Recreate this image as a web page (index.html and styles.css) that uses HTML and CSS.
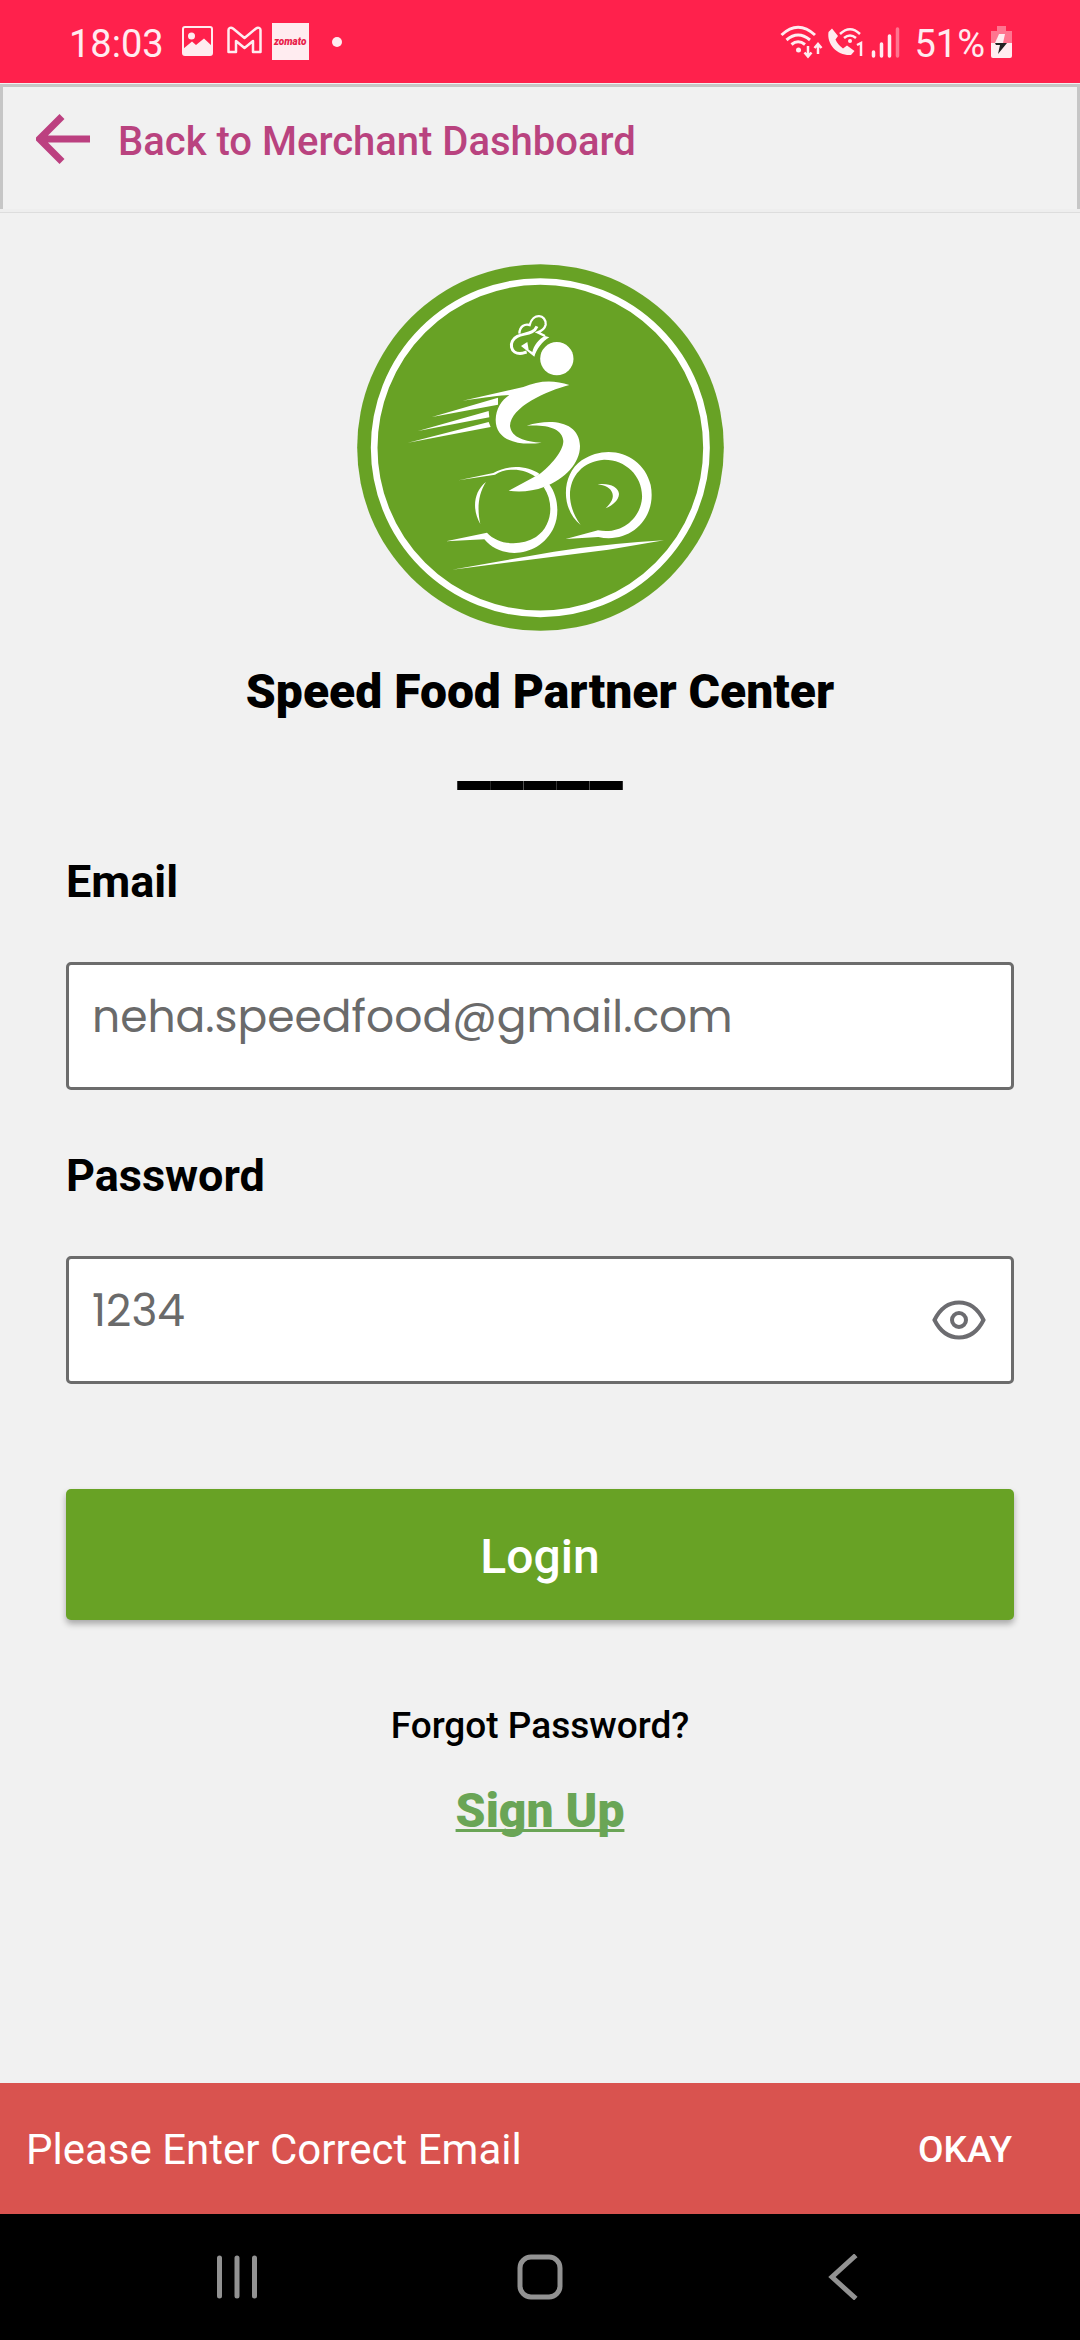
FILE: index.html
```html
<!DOCTYPE html>
<html lang="en">
<head>
<meta charset="utf-8">
<meta name="viewport" content="width=device-width, initial-scale=1">
<title>Speed Food Partner Center</title>
<link rel="stylesheet" href="styles.css">
</head>
<body>
<div class="status">
  <div class="status-side">
    <span class="clock">18:03</span>
    <svg class="ic-photo" width="31" height="31" viewBox="0 0 31 31"><rect x="1" y="1" width="29" height="28" rx="2" fill="none" stroke="#ffecf0" stroke-width="2"/><circle cx="9.500" cy="10" r="3.500" fill="#ffecf0"/><path d="M1 23L10 15.500 14 19 22 12.500 30 20V29H1z" fill="#ffecf0"/></svg>
    <svg class="ic-mail" width="35" height="31" viewBox="0 0 35 31"><path d="M1.500 26V4C1.500 2 4 1 6 2.500L17.500 12 29 2.500C31 1 33.500 2 33.500 4V26H26V15L17.500 22 9 15V26z" fill="none" stroke="#ffecf0" stroke-width="2.500" stroke-linejoin="round"/></svg>
    <span class="brand">zomato</span>
    <span class="dot"></span>
  </div>
  <div class="status-side">
    <svg width="120" height="34" viewBox="0 0 120 34" fill="none" stroke="#ffecf0">
      <path d="M1.500 10Q18 -5.500 35 10M6.500 15Q18 5 30 15M11.500 19.500Q18 14 25 19.500" stroke-width="3"/>
      <circle cx="18.500" cy="25" r="2.500" fill="#ffecf0" stroke="none"/>
      <path d="M28 21V31M24.500 27.500L28 31.500 31.500 27.500M38 29V19M34.500 23L38 19 41.500 23" stroke-width="2.500"/>
      <path d="M52 3.500L48.500 7C46.500 20 58 31 71 30L74.500 26 67 20.500 63 23.500Q57.500 19.500 55.500 14.500L58 11z" fill="#ffecf0" stroke="none"/>
      <path d="M60 9Q70 -.5 80 9M64 13Q70 8 76 13" stroke-width="2.500"/>
      <circle cx="70" cy="16" r="2" fill="#ffecf0" stroke="none"/>
      <path d="M77 20L81 18V31" stroke-width="2.500"/>
      <path d="M93.500 27V31M101.500 19V31M109.500 11V31" stroke-width="3.500" stroke-linecap="round"/>
      <path d="M117.500 4V31" stroke="#ff7590" stroke-width="3.500" stroke-linecap="round"/>
    </svg>
    <span class="clock charge">51%</span>
    <svg class="ic-battery" width="21" height="34" viewBox="0 0 21 34"><path d="M6 1H15V6H21V18H0V6H6z" fill="#ff7590"/><path d="M0 18H21V31Q21 33 19 33H2Q0 33 0 31z" fill="#ffecf0"/><path d="M8 9H14L12 18H4z" fill="#ffecf0"/><path d="M4 18H16L7 29 9 20H5z" fill="#222"/></svg>
  </div>
</div>

<header class="topbar">
  <a class="back" href="#">
    <svg width="54" height="50" viewBox="0 0 54 50"><path d="M26 2.500L3.500 25 26 47.500M3 25H54" fill="none" stroke="#bc4080" stroke-width="7"/></svg>
    <span class="back-text">Back to Merchant Dashboard</span>
  </a>
</header>

<main class="content">
  <svg class="logo" viewBox="21 27 1101 1101" role="img" aria-label="Speed Food">
    <circle cx="571.500" cy="577.500" r="550" fill="#68a225"/>
    <circle cx="571" cy="578" r="498.500" fill="none" stroke="#fff" stroke-width="20"/>
    <g fill="#fff">
      <circle cx="620.500" cy="311" r="50"/>
      <path d="M338 437L520 396C565 376 612 374 658 390C590 408 482 455 480 513C484 548 525 560 575 563C505 573 437 557 437 494C438 462 454 436 478 420Q440 422 338 437z"/>
      <path d="M246 486L444 428V449zM204 528L416 468L418 487zM174 563L416 501L422 516z"/>
      <path d="M530 512C610 488 688 502 690 573C690 625 645 672 584 695C548 709 510 712 476 707L569 657C600 633 640 590 640 558C638 520 590 508 530 512z"/>
      <path d="M326 676L430 654C475 629 530 631 569 657L556 665C520 638 470 638 435 659z"/>
      <path d="M581 696L597 687C623 720 630 775 612 816C572 906 455 917 403 853L288 859 411 833C445 870 510 875 558 846C606 814 614 745 581 696z"/>
      <path d="M408 681C384 717 381 764 391 807C368 769 367 713 408 681z"/>
      <path d="M692 810C630 760 635 658 695 616C775 562 880 598 902 690C922 792 838 867 745 846L647 852 744 826C815 840 871 790 876 730C880 665 828 613 762 614C668 620 626 720 692 810z"/>
      <path d="M743 688C778 683 806 696 807 717C806 735 791 749 767 760C784 742 792 730 787 714C782 699 765 691 743 688z"/>
      <path d="M306 944L612 890Q790 864 942 856L775 884z"/>
    </g>
    <g fill="none" stroke="#fff" stroke-width="7">
      <path d="M508 236C509 213 524 206 539 210C549 172 589 178 587 209Q583 225 563 232L585 243"/>
      <path d="M561 214C550 239 523 234 502 244C474 257 479 300 516 295L530 291" stroke-width="9"/>
    </g>
    <path d="M585 243L598 247C576 260 560 282 553 305L513 273 532 261 536 284 547 291C551 273 566 251 585 243z" fill="#fff"/>
  </svg>

  <h1 class="title">Speed Food Partner Center</h1>
  <div class="rule">_____</div>

  <form class="form">
    <label class="label" for="email">Email</label>
    <input class="field" id="email" type="text" placeholder="neha.speedfood@gmail.com">
    <label class="label" for="password">Password</label>
    <div class="field-wrap">
      <input class="field" id="password" type="text" placeholder="1234">
      <button class="eye" type="button" aria-label="Show password">
        <svg width="54" height="40" viewBox="0 0 54 40" fill="none" stroke="#6c6c70" stroke-width="4"><path d="M2.500 20C8 9 16 2.500 27 2.500S46 9 51.500 20C46 31 38 37.500 27 37.500S8 31 2.500 20z"/><circle cx="27" cy="20" r="7"/></svg>
      </button>
    </div>
    <button class="login" type="button">Login</button>
  </form>

  <a class="forgot" href="#">Forgot Password?</a>
  <a class="signup" href="#">Sign Up</a>
</main>

<div class="snackbar" role="alert">
  <span>Please Enter Correct Email</span>
  <button class="okay" type="button">OKAY</button>
</div>

<nav class="navbar">
  <button type="button" aria-label="Recent apps"><svg width="46" height="46" viewBox="0 0 46 46"><path d="M5.500 4V42M23 4V42M40.500 4V42" stroke="#929292" stroke-width="5" stroke-linecap="round"/></svg></button>
  <button type="button" aria-label="Home"><svg width="46" height="46" viewBox="0 0 46 46"><rect x="3" y="3" width="40" height="40" rx="11" fill="none" stroke="#929292" stroke-width="5"/></svg></button>
  <button type="button" aria-label="Back"><svg width="46" height="46" viewBox="0 0 46 46"><path d="M34 3L12 23 34 43" fill="none" stroke="#929292" stroke-width="5" stroke-linecap="square"/></svg></button>
</nav>
</body>
</html>
```
FILE: styles.css
```css
* { box-sizing: border-box; }

body {
  margin: 0;
  min-height: 100vh;
  display: flex;
  flex-direction: column;
  background: #f1f1f1;
  color: #000;
  font-family: Roboto, sans-serif;
}

svg { display: block; flex: none; }
a { color: inherit; text-decoration: none; }
button { border: 0; padding: 0; background: none; font: inherit; color: inherit; }

.status {
  height: 83px;
  padding: 0 68px 0 69px;
  display: flex;
  align-items: center;
  justify-content: space-between;
  background: #ff214c;
  color: #ffecf0;
}
.status-side { display: flex; align-items: center; }
.clock { font-size: 38px; line-height: 44px; padding-top: 4px; }
.charge { margin-left: 14px; }
.ic-photo { margin-left: 18px; }
.ic-mail { margin: 0 10px 0 14px; }
.ic-battery { margin-left: 6px; }
.brand {
  width: 37px;
  background: #ffecf0;
  color: #e8204a;
  font: italic 900 10px/37px Roboto, sans-serif;
  text-align: center;
}
.dot { width: 10px; height: 10px; margin-left: 23px; border-radius: 50%; background: #ffecf0; }

.topbar {
  padding: 22px 33px 40px;
  border: 3px solid #c6c6c6;
  border-bottom-width: 0;
  box-shadow: 0 3px 0 #eeeeee, 0 4px 0 #dddddd;
  margin-top: 1px;
}
.back {
  display: flex;
  align-items: center;
  gap: 28px;
  color: #b9437f;
  font-size: 40px;
  line-height: 54px;
  font-weight: 500;
}
.back-text { padding-top: 6px; }

.content {
  flex: 1;
  padding: 55px 66px 0;
  display: flex;
  flex-direction: column;
  align-items: center;
}
.logo { width: 367px; height: 367px; }
.title { margin: 33px 0 0; font-size: 48px; line-height: 56px; font-weight: 900; }
.rule { margin-bottom: 66px; font-size: 75px; line-height: 70px; font-weight: 900; }

.form { width: 100%; display: flex; flex-direction: column; }
.label { font-size: 45px; line-height: 52px; font-weight: 700; margin-bottom: 54px; }
.field {
  width: 100%;
  height: 128px;
  margin-bottom: 60px;
  padding: 0 23px 19px;
  border: 3px solid #6c6c6c;
  border-radius: 5px;
  background: #fff;
  font: 44px/60px Poppins, Inter, sans-serif;
}
.field::placeholder { color: #6a6a6a; opacity: 1; }
.field-wrap { position: relative; }
.eye { position: absolute; right: 28px; top: 44px; }
.login {
  margin-top: 45px;
  height: 131px;
  padding-top: 3px;
  border-radius: 5px;
  background: #68a225;
  box-shadow: 0 4px 6px rgba(0, 0, 0, 0.3);
  color: #fff;
  font-size: 48px;
  font-weight: 500;
}
.forgot { margin-top: 80px; font-size: 37px; line-height: 52px; font-weight: 500; }
.signup {
  margin-top: 31px;
  color: #6aa556;
  font-size: 48px;
  line-height: 56px;
  font-weight: 900;
  text-decoration: underline;
  text-decoration-skip-ink: none;
  text-decoration-thickness: 3px;
}

.snackbar {
  height: 131px;
  padding: 2px 68px 0 26px;
  display: flex;
  align-items: center;
  justify-content: space-between;
  background: #d9534f;
  color: #fff;
  font-size: 42px;
}
.okay { font-size: 37px; font-weight: 500; }

.navbar {
  height: 126px;
  padding: 0 86px;
  display: grid;
  grid-template-columns: repeat(3, 1fr);
  justify-items: center;
  align-items: center;
  background: #000;
}
```
